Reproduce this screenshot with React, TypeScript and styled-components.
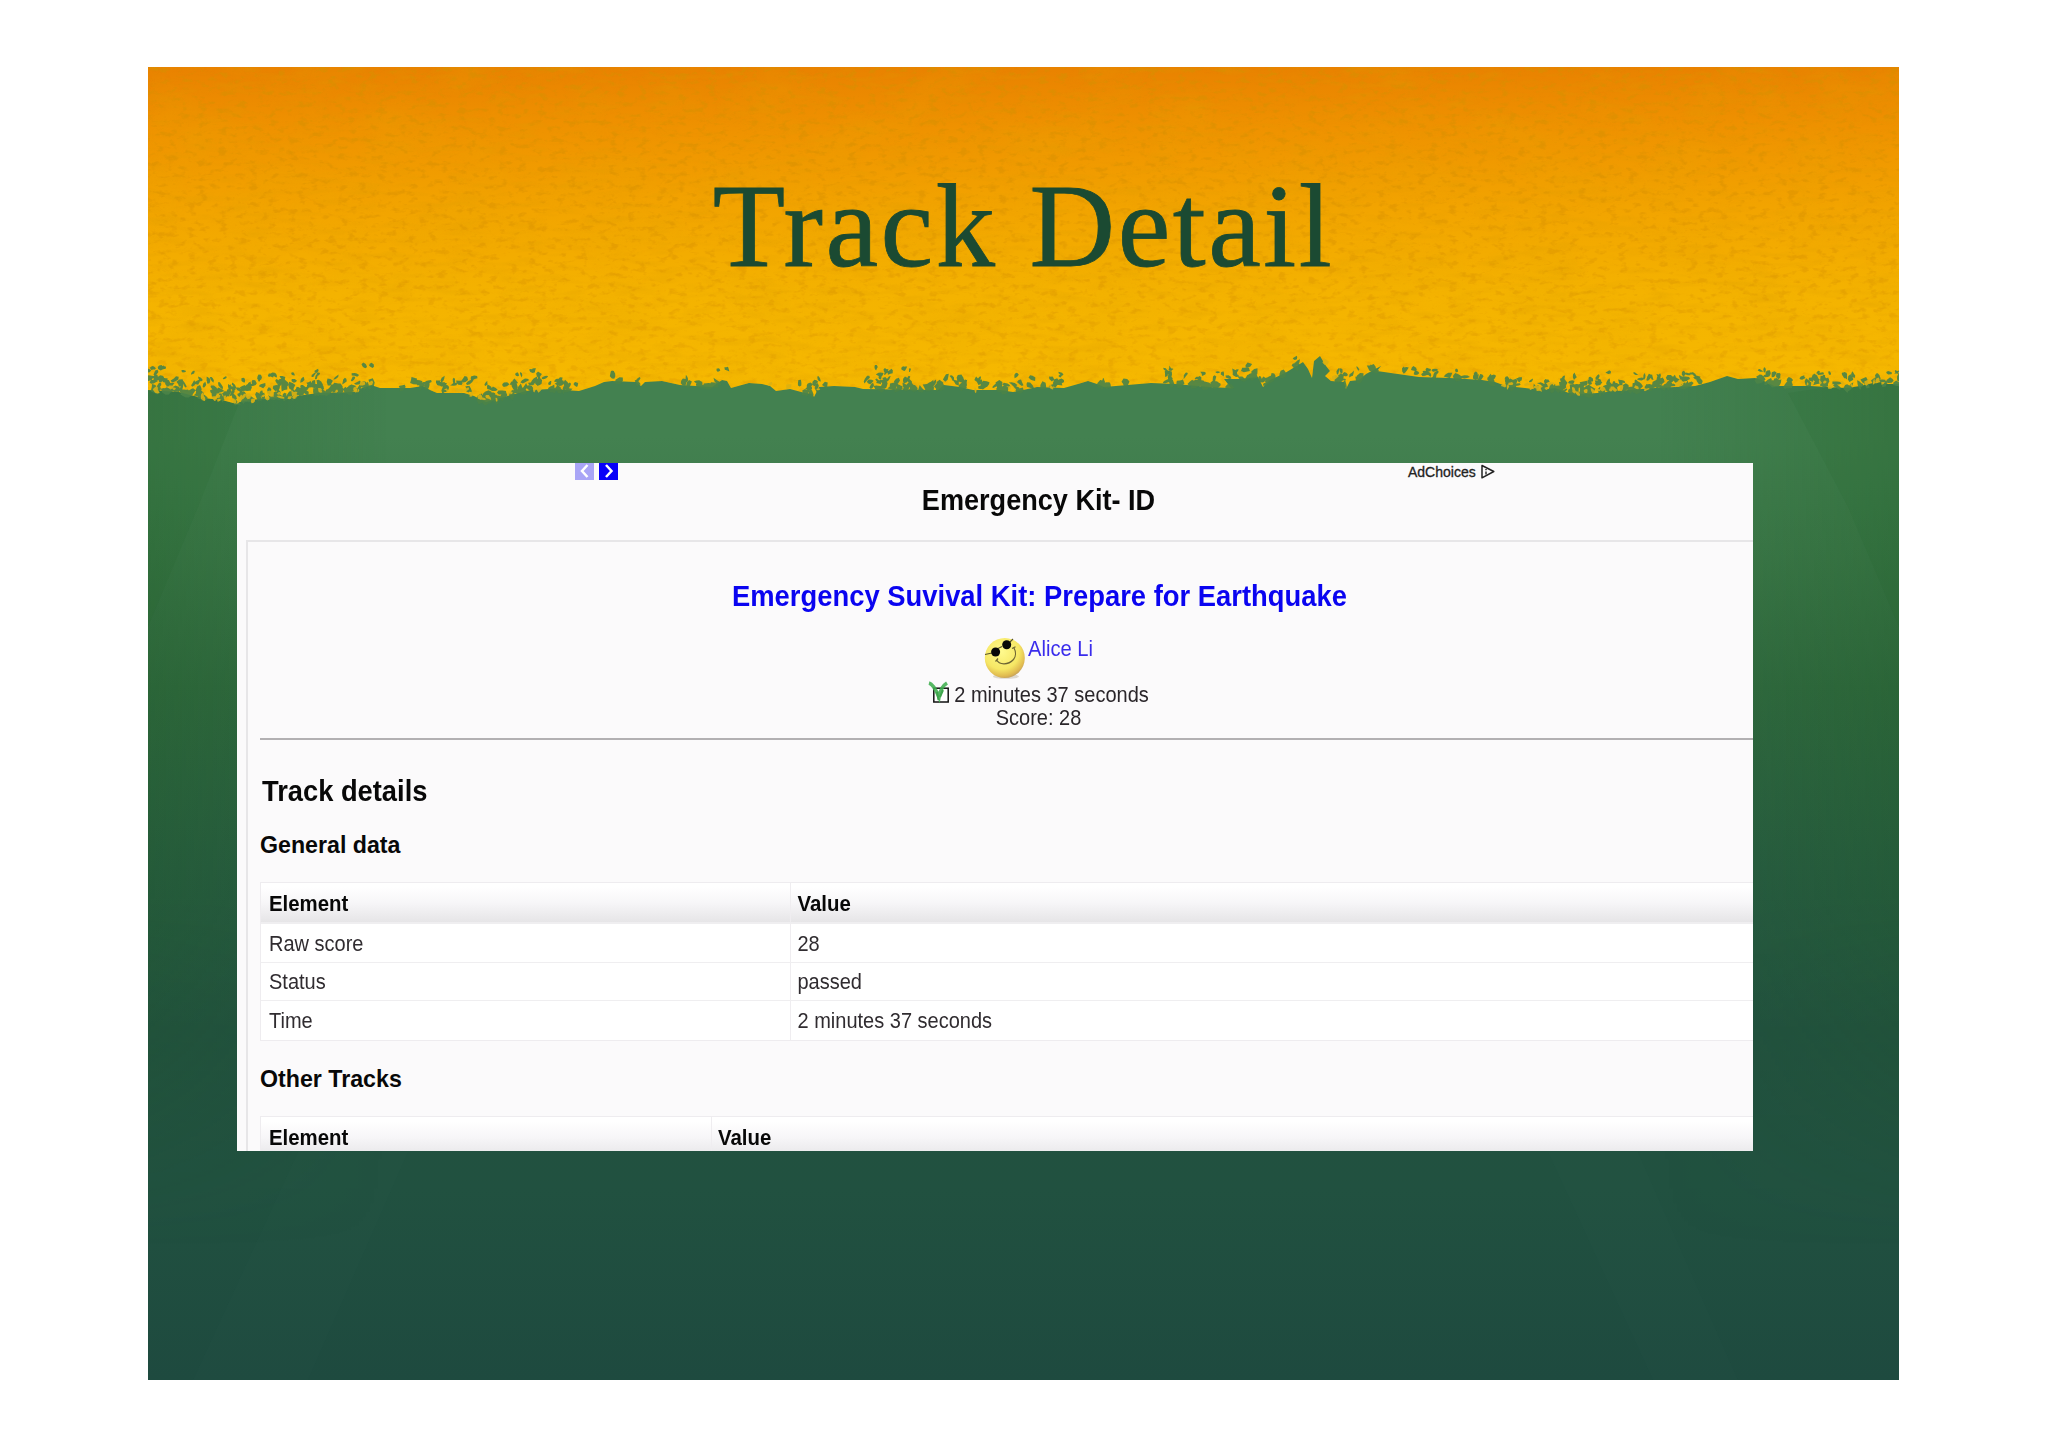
import React from 'react';
import styled, { createGlobalStyle } from 'styled-components';

const Global = createGlobalStyle`
  *, *::before, *::after { box-sizing: border-box; }
  html, body { margin: 0; background: #fff; }
  body { font-family: "Liberation Sans", Arial, sans-serif; overflow: hidden; }
`;

const Page = styled.main`
  width: 2048px;
  height: 1447px;
  padding: 67px 0 0 148px;
  overflow: hidden;
`;

const Slide = styled.article`
  position: relative;
  width: 1751px;
  height: 1313px;
  overflow: hidden;
  background: linear-gradient(
    180deg,
    #438150 0, #438150 370px, #3c7849 480px, #30693f 620px,
    #285c41 800px, #22513f 960px, #215140 1120px, #1e4a3f 1313px
  );
`;

const Artwork = styled.svg`
  position: absolute;
  inset: 0;
  width: 1751px;
  height: 1313px;
`;

const SlideBody = styled.div`
  position: relative;
  display: flex;
  flex-direction: column;
`;

const SlideTitle = styled.h1`
  margin: 0;
  height: 396px;
  padding-top: 89px;
  text-align: center;
  color: #1b4a32;
  letter-spacing: 2.5px;
  -webkit-text-stroke: 0.8px #1b4a32;
  font: 400 118.5px/140px "Liberation Serif", "Times New Roman", serif;
`;

const Panel = styled.section`
  width: 1516px;
  height: 688px;
  margin-left: 89px;
  overflow: hidden;
  background: #fbfafb;
  color: #111;
`;

const Text = styled.span<{ $size: number; $line: number; $stretch?: number; $bold?: boolean; $color?: string }>`
  display: block;
  white-space: nowrap;
  font-size: ${(p) => p.$size}px;
  line-height: ${(p) => p.$line}px;
  font-weight: ${(p) => (p.$bold ? 700 : 400)};
  color: ${(p) => p.$color ?? '#080808'};
  transform: scaleY(${(p) => p.$stretch ?? 1.07});
  transform-origin: 50% ${(p) => p.$line / 2 + p.$size * 0.3465}px;
`;

const AdBar = styled.div`
  display: flex;
  height: 17px;
  padding-left: 338px;
`;

const Pager = styled.div`
  display: flex;
  gap: 5px;
  width: 833px;
`;

const PageButton = styled.span<{ $active?: boolean }>`
  display: flex;
  width: 19px;
  height: 17px;
  background: ${(p) => (p.$active ? '#0800f8' : '#a9a5f6')};
  svg { width: 19px; height: 17px; }
`;

const AdChoices = styled.div`
  display: flex;
  align-items: flex-start;
  gap: 5px;
  padding-top: 1px;
  -webkit-text-stroke: 0.3px #222;
`;

const Centered = styled.div<{ $top?: number }>`
  display: flex;
  justify-content: center;
  align-items: flex-start;
  width: 1559px;
  margin-top: ${(p) => p.$top ?? 0}px;
`;

const PageHeading = styled(Centered)`
  margin: 5px 0 23px 22px;
`;

const Frame = styled.div`
  width: 1585px;
  margin-left: 9px;
  padding: 39px 12px 0 12px;
  border: 2px solid #e7e6e8;
`;

const UserRow = styled(Centered)`
  height: 43px;
  gap: 2px;
  padding-right: 2px;
  svg { width: 42px; height: 42px; }
`;

const ResultRow = styled(Centered)`
  height: 23px;
  gap: 4px;
  padding-right: 2px;
  svg { width: 22px; height: 24px; margin-top: -2px; }
`;

const ScoreRow = styled(Centered)`
  padding-right: 2px;
`;

const Rule = styled.hr`
  width: 1559px;
  height: 2px;
  margin: 8px 0 36px;
  border: 0;
  background: #b2b0b2;
`;

const Heading = styled.div<{ $top?: number; $indent?: number }>`
  display: flex;
  margin: ${(p) => p.$top ?? 0}px 0 23px;
  padding-left: ${(p) => p.$indent ?? 0}px;
`;

const Table = styled.div`
  width: 1559px;
  border: 1px solid #eeecef;
  background: #fff;
`;

const Row = styled.div<{ $first: number; $head?: boolean }>`
  display: grid;
  grid-template-columns: ${(p) => p.$first}px 1fr;
  height: ${(p) => (p.$head ? 41 : 38.5)}px;
  border-bottom: ${(p) => (p.$head ? 2 : 1)}px solid #efeef0;
  background: ${(p) => (p.$head ? 'linear-gradient(#fff 10%, #f7f6f8 50%, #e6e5e7)' : '#fff')};
  &:last-child { border-bottom: 0; }
`;

const Cell = styled.div<{ $head?: boolean }>`
  display: flex;
  padding: ${(p) => (p.$head ? 9 : 7.5)}px 8px 0;
  & + & { border-left: 1px solid ${(p) => (p.$head ? '#f7f6f8' : '#efedf0')}; padding-left: 6.5px; }
`;

const EDGE: [number, number][] = [
  [148, 390], [179, 392], [190, 395], [203, 398], [222, 400], [233, 403], [245, 401], [259, 399], [290, 397], [318, 393],
  [353, 392], [362, 388], [371, 385], [380, 388], [397, 388], [410, 388], [423, 386], [430, 390], [437, 393], [464, 393],
  [474, 396], [486, 402], [504, 397], [518, 393], [531, 390], [550, 389], [579, 391], [595, 386], [604, 382], [612, 381],
  [636, 382], [641, 386], [645, 382], [662, 381], [680, 385], [712, 387], [722, 380], [727, 381], [731, 388], [749, 383],
  [762, 384], [770, 386], [776, 391], [790, 389], [805, 393], [812, 394], [814, 397], [819, 387], [834, 386], [855, 387],
  [863, 389], [938, 390], [944, 385], [960, 387], [973, 390], [1000, 390], [1013, 392], [1037, 387], [1064, 388], [1078, 384],
  [1088, 381], [1097, 384], [1104, 387], [1151, 383], [1175, 384], [1210, 387], [1231, 388], [1224, 379], [1240, 379], [1258, 377],
  [1263, 387], [1270, 380], [1285, 373], [1303, 362], [1308, 369], [1312, 378], [1314, 361], [1320, 356], [1326, 366], [1330, 371],
  [1325, 376], [1331, 381], [1344, 382], [1346, 389], [1350, 381], [1359, 380], [1366, 374], [1381, 366], [1377, 371], [1419, 377],
  [1450, 378], [1482, 380], [1495, 382], [1506, 386], [1525, 388], [1541, 390], [1555, 388], [1569, 393], [1584, 394], [1597, 393],
  [1616, 391], [1655, 388], [1695, 386], [1710, 382], [1727, 376], [1738, 379], [1755, 378], [1764, 381], [1774, 386], [1810, 386],
  [1846, 388], [1860, 386], [1873, 383], [1882, 382], [1888, 384], [1899, 384],
];

const edgePath = `M0 0 L0 323 ${EDGE.map(([x, y]) => `L${x - 148} ${y - 67}`).join(' ')} L1751 0 Z`;

const edgeAt = (x: number) => {
  for (let i = 1; i < EDGE.length; i++) {
    const [x0, y0] = EDGE[i - 1];
    const [x1, y1] = EDGE[i];
    if (x >= x0 && x <= x1 && x1 > x0) return y0 + ((y1 - y0) * (x - x0)) / (x1 - x0);
  }
  return 386;
};

/* Ragged stretches of the brush stroke: start, end, flecks above, flecks below, reach. */
const RAGGED: [number, number, number, number, number][] = [
  [148, 300, 130, 34, 24], [300, 372, 46, 8, 22], [400, 430, 9, 0, 14], [436, 540, 58, 16, 20],
  [545, 580, 16, 0, 15], [610, 645, 5, 0, 9], [680, 728, 11, 0, 14], [765, 830, 11, 4, 15],
  [866, 912, 32, 0, 23], [912, 1064, 46, 4, 17], [1100, 1125, 6, 0, 8], [1165, 1262, 42, 0, 15],
  [1255, 1300, 12, 0, 10], [1325, 1375, 18, 3, 14], [1400, 1500, 22, 0, 8], [1500, 1560, 26, 12, 9],
  [1560, 1620, 44, 10, 22], [1620, 1700, 48, 8, 16], [1758, 1790, 20, 0, 14], [1800, 1899, 38, 12, 14],
];

const makeFlecks = () => {
  let seed = 7321;
  const rnd = () => {
    seed = (seed * 1103515245 + 12345) % 2147483648;
    return seed / 2147483648;
  };
  const blob = (x: number, y: number, r: number) => {
    const turn = rnd() * 6.28;
    const slim = 0.35 + rnd() * 0.5;
    const pts: string[] = [];
    for (let k = 0; k < 7; k++) {
      const a = (k / 7) * 6.283;
      const q = r * (0.6 + rnd() * 0.8);
      const px = Math.cos(a) * q;
      const py = Math.sin(a) * q * slim;
      pts.push(`${(x - 148 + px * Math.cos(turn) - py * Math.sin(turn)).toFixed(1)} ${(y - 67 + px * Math.sin(turn) + py * Math.cos(turn)).toFixed(1)}`);
    }
    return `M${pts.join('L')}Z`;
  };
  let above = '';
  let below = '';
  RAGGED.forEach(([a, b, up, down, reach]) => {
    for (let i = 0; i < up; i++) {
      const x = a + rnd() * (b - a);
      const t = Math.pow(rnd(), 1.5);
      above += blob(x, edgeAt(x) - t * reach, 4 - t * 1.7 + rnd() * 0.6);
    }
    for (let i = 0; i < down; i++) {
      const x = a + rnd() * (b - a);
      below += blob(x, edgeAt(x) - 5 + rnd() * 6, 1.6 + rnd() * 1.8);
    }
  });
  return { above, below };
};

const flecks = makeFlecks();

const Backdrop = () => (
  <Artwork viewBox="0 0 1751 1313" aria-hidden="true">
    <defs>
      <linearGradient id="paint" x1="0" y1="0" x2="0" y2="336" gradientUnits="userSpaceOnUse">
        <stop offset="0" stopColor="#e98200" />
        <stop offset=".18" stopColor="#ef9200" />
        <stop offset=".42" stopColor="#f2a400" />
        <stop offset=".68" stopColor="#f4b300" />
        <stop offset="1" stopColor="#f6ba00" />
      </linearGradient>
      <linearGradient id="fade" x1="0" y1="0" x2="0" y2="1">
        <stop offset="0" stopColor="#fff" />
        <stop offset=".5" stopColor="#aaa" />
        <stop offset="1" stopColor="#666" />
      </linearGradient>
      <linearGradient id="shadeL"><stop offset="0" stopColor="#1c5a22" stopOpacity=".24" /><stop offset="1" stopColor="#1c5a22" stopOpacity="0" /></linearGradient>
      <linearGradient id="shadeR"><stop offset="0" stopColor="#1c5a22" stopOpacity="0" /><stop offset="1" stopColor="#1c5a22" stopOpacity=".24" /></linearGradient>
      <linearGradient id="dim" x1="0" y1="0" x2="0" y2="1"><stop offset="0" stopColor="#fff" /><stop offset=".6" stopColor="#fff" /><stop offset="1" stopColor="#000" /></linearGradient>
      <mask id="sides"><rect y="300" width="1751" height="880" fill="url(#dim)" /></mask>
      <mask id="weaveMask"><rect width="1751" height="340" fill="url(#fade)" /></mask>
      <clipPath id="banner"><path d={edgePath} /></clipPath>
      <filter id="weave" x="0" y="0" width="100%" height="100%">
        <feTurbulence type="fractalNoise" baseFrequency=".1 .17" numOctaves="3" seed="8" />
        <feColorMatrix values="0 0 0 0 .68  0 0 0 0 .28  0 0 0 0 0  5 0 0 0 -2.75" />
      </filter>
      <filter id="cloud" x="0" y="0" width="100%" height="100%">
        <feTurbulence type="fractalNoise" baseFrequency=".014 .022" numOctaves="3" seed="3" />
        <feColorMatrix values="0 0 0 0 .8  0 0 0 0 .4  0 0 0 0 0  1.6 0 0 0 -.7" />
      </filter>
      <filter id="strand" x="0" y="0" width="100%" height="100%">
        <feTurbulence type="fractalNoise" baseFrequency=".03 .14" numOctaves="2" seed="21" />
        <feColorMatrix values="0 0 0 0 .72  0 0 0 0 .34  0 0 0 0 0  2.4 0 0 0 -1.2" />
      </filter>
    </defs>
    <g mask="url(#sides)">
      <rect y="300" width="240" height="880" fill="url(#shadeL)" />
      <rect x="1511" y="300" width="240" height="880" fill="url(#shadeR)" />
    </g>
    <path d="M0 310L95 326L50 440L0 560ZM1751 310L1640 326L1700 440L1751 560Z" fill="#1e5f25" opacity=".1" />
    <path d="M45 1313L150 1085H260L160 1313ZM1590 1313L1490 1085H1400L1505 1313Z" fill="#6aa58b" opacity=".02" />
    <path d={edgePath} fill="url(#paint)" />
    <g clipPath="url(#banner)">
      <rect width="1751" height="340" filter="url(#cloud)" opacity=".28" />
      <rect width="1751" height="340" filter="url(#strand)" opacity=".3" />
      <g mask="url(#weaveMask)">
        <rect width="1751" height="340" filter="url(#weave)" opacity=".6" />
      </g>
    </g>
    <path d={flecks.above} fill="#4b8348" opacity=".92" />
    <path d={flecks.below} fill="#dcb011" opacity=".9" />
  </Artwork>
);

const Smiley = () => (
  <svg viewBox="0 0 42 42" aria-label="Alice Li avatar">
    <defs>
      <radialGradient id="face" cx=".42" cy=".34" r=".68">
        <stop offset="0" stopColor="#fffa8e" />
        <stop offset=".65" stopColor="#f6e765" />
        <stop offset=".9" stopColor="#e0ba50" />
        <stop offset="1" stopColor="#c4a05c" />
      </radialGradient>
    </defs>
    <ellipse cx="22" cy="39.500" rx="13" ry="2.300" fill="#ddd8cf" />
    <ellipse cx="20.800" cy="21" rx="20" ry="20" fill="url(#face)" />
    <path d="M1 17.500 8 16M13 12 18 9.500M25 6 29 2" stroke="#59542b" strokeWidth="1.100" fill="none" />
    <circle cx="11.600" cy="15" r="4.500" fill="#080808" />
    <circle cx="22.700" cy="7.800" r="4.500" fill="#080808" />
    <path d="M12.500 22.500C15 28 24 28.500 29.500 22.500C32 19.500 32 14.500 29.800 10.500M11.500 24.500 14 21.500M28 11.500 31.500 9.800" stroke="#6c6433" strokeWidth="1.200" fill="none" />
  </svg>
);

const Passed = () => (
  <svg viewBox="0 0 22 24" aria-label="passed">
    <rect x="5.800" y="7.200" width="14.400" height="13.800" fill="#fff" stroke="#111" strokeWidth="1.500" />
    <path d="M1 2C5 3 8 9 11 16C12 10 14 5 19 2" stroke="#3fae4e" strokeWidth="3.600" fill="none" opacity=".88" />
    <path d="M9 11 10.500 19M12 16 15 9" stroke="#3fa64c" strokeWidth="2" fill="none" />
  </svg>
);

const Chevron = ({ d }: { d: string }) => (
  <svg viewBox="0 0 19 17"><path d={d} fill="none" stroke="#fff" strokeWidth="2.500" /></svg>
);

const TableRow = ({ first, cells, head }: { first: number; cells: string[]; head?: boolean }) => (
  <Row $first={first} $head={head}>
    {cells.map((c) => (
      <Cell key={c} $head={head}>
        <Text $size={head ? 20.4 : 20} $line={24} $bold={head} $color={head ? '#080808' : '#302c30'}>{c}</Text>
      </Cell>
    ))}
  </Row>
);

const GENERAL = [['Raw score', '28'], ['Status', 'passed'], ['Time', '2 minutes 37 seconds']];

export default function App() {
  return (
    <Page>
      <Global />
      <Slide>
        <Backdrop />
        <SlideBody>
          <SlideTitle>Track Detail</SlideTitle>
          <Panel>
            <AdBar>
              <Pager>
                <PageButton><Chevron d="M12.500 2 7 8 12.500 14" /></PageButton>
                <PageButton $active><Chevron d="M7 2 12.500 8 7 14" /></PageButton>
              </Pager>
              <AdChoices>
                <Text $size={14} $line={17} $stretch={1} $color="#222">AdChoices</Text>
                <svg width="14" height="16" viewBox="0 0 14 16">
                  <path d="M1 1.500 12.800 7.500 1 13.800Z" fill="none" stroke="#222" strokeWidth="1.500" strokeLinejoin="round" />
                  <path d="M5 5V6.200M5 7.500V10.500" stroke="#222" strokeWidth="1.400" />
                </svg>
              </AdChoices>
            </AdBar>
            <PageHeading><Text $size={27.1} $line={32} $bold>Emergency Kit- ID</Text></PageHeading>
            <Frame>
              <Centered><Text $size={27.4} $line={32} $stretch={1.05} $bold $color="#0a04f0">Emergency Suvival Kit: Prepare for Earthquake</Text></Centered>
              <UserRow $top={24}>
                <Smiley />
                <Text $size={20.2} $line={24} $color="#3a2cec">Alice Li</Text>
              </UserRow>
              <ResultRow $top={3}>
                <Passed />
                <Text $size={20} $line={24} $color="#2a262a">2 minutes 37 seconds</Text>
              </ResultRow>
              <ScoreRow><Text $size={20} $line={24} $color="#2a262a">Score: 28</Text></ScoreRow>
              <Rule />
              <Heading $indent={2}><Text $size={27.3} $line={32} $stretch={1.05} $bold>Track details</Text></Heading>
              <Heading><Text $size={23.2} $line={28} $stretch={1} $bold>General data</Text></Heading>
              <Table>
                <TableRow head first={529} cells={['Element', 'Value']} />
                {GENERAL.map((cells) => <TableRow key={cells[0]} first={529} cells={cells} />)}
              </Table>
              <Heading $top={24}><Text $size={23.2} $line={28} $stretch={1} $bold>Other Tracks</Text></Heading>
              <Table>
                <TableRow head first={449.5} cells={['Element', 'Value']} />
              </Table>
            </Frame>
          </Panel>
        </SlideBody>
      </Slide>
    </Page>
  );
}
